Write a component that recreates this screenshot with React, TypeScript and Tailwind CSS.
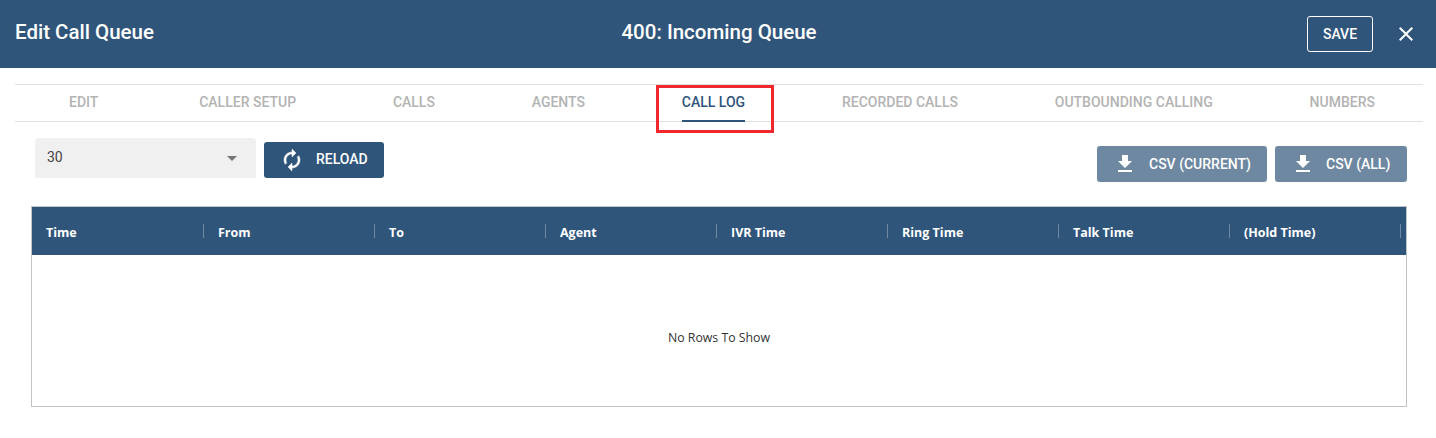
import { MdClose, MdFileDownload } from "react-icons/md";

const tabs = ["EDIT", "CALLER SETUP", "CALLS", "AGENTS", "CALL LOG", "RECORDED CALLS", "OUTBOUNDING CALLING", "NUMBERS"];
const columns = ["Time", "From", "To", "Agent", "IVR Time", "Ring Time", "Talk Time", "(Hold Time)"];

export default function App() {
  return (
    <div className="h-[438px] w-full overflow-hidden bg-white font-['Roboto',sans-serif]">
      {/* Header */}
      <div className="flex h-[68px] items-center justify-between bg-[#30557a] pl-[15px] pr-[19px] text-white">
        <h1 className="-mt-[4px] w-[300px] text-[20.5px] font-medium">Edit Call Queue</h1>
        <h2 className="-mt-[4px] text-[20.5px] font-medium">400: Incoming Queue</h2>
        <div className="flex w-[294px] items-center justify-end gap-[21px]">
          <button className="h-[36px] w-[66px] rounded-[3px] border border-white text-[14px] font-medium">SAVE</button>
          <MdClose className="h-[24px] w-[24px] -mr-[1px]" />
        </div>
      </div>

      {/* Tabs */}
      <div className="relative mx-[15px] mt-[16px] flex h-[38px] w-[1408px] justify-between border-y border-[#e0e0e0] pl-[54px] pr-[48px] text-[14px] font-medium text-[#b3b3b3]">
        {tabs.map((tab) =>
          tab === "CALL LOG" ? (
            <div key={tab} className="relative flex h-[37px] items-center border-b-2 border-[#30557a] text-[#30557a]">
              {tab}
              <div className="absolute left-[-26px] top-0 h-[48px] w-[118px] border-[3px] border-[#f0272d]" />
            </div>
          ) : (
            <div key={tab} className="flex h-[35px] items-center first:mr-[4px]">
              {tab}
            </div>
          )
        )}
      </div>

      {/* Toolbar */}
      <div className="mt-[16px] flex items-start justify-between pl-[35px] pr-[29px]">
        <div className="flex items-start gap-[8px]">
          <div className="flex h-[40px] w-[221px] items-center justify-between rounded-t-[4px] bg-[#f0f0f0] pl-[12px] pr-[19px] text-[14px] text-[#444444]">
            <span className="-mt-[2px]">30</span>
            <span className="h-0 w-0 border-x-[5px] border-t-[5px] border-x-transparent border-t-[#757575]" />
          </div>
          <button className="mt-[4px] flex h-[36px] w-[120px] items-center rounded-[3px] bg-[#30557a] pl-[16px] text-[14px] font-medium text-white">
            <svg viewBox="0 0 24 24" className="h-[24px] w-[24px] -scale-x-100 fill-current stroke-current stroke-[0.5]">
              <path d="M12 4V1L8 5l4 4V6c3.31 0 6 2.69 6 6 0 1.01-.25 1.97-.7 2.8l1.46 1.46C19.54 15.03 20 13.57 20 12c0-4.42-3.58-8-8-8zm0 14c-3.31 0-6-2.69-6-6 0-1.01.25-1.97.7-2.8L5.24 7.74C4.46 8.97 4 10.43 4 12c0 4.42 3.58 8 8 8v3l4-4-4-4v3z" />
            </svg>
            <span className="ml-[12px] -mt-[1px]">RELOAD</span>
          </button>
        </div>
        <div className="mt-[8px] flex gap-[8px]">
          <button className="flex h-[36px] w-[170px] items-center rounded-[3px] bg-[#6e88a2] pl-[16px] text-[14px] font-medium text-white">
            <MdFileDownload className="h-[24px] w-[24px]" />
            <span className="ml-[12px]">CSV (CURRENT)</span>
          </button>
          <button className="flex h-[36px] w-[132px] items-center rounded-[3px] bg-[#6e88a2] pl-[16px] text-[14px] font-medium text-white">
            <MdFileDownload className="h-[24px] w-[24px]" />
            <span className="ml-[11px]">CSV (ALL)</span>
          </button>
        </div>
      </div>

      {/* Grid */}
      <div className="ml-[31px] mt-[24px] flex h-[201px] w-[1376px] flex-col border border-[#bdc3c7] font-['Open_Sans',sans-serif]">
        <div className="flex h-[48px] shrink-0 items-center bg-[#30557a] pl-px text-[12.5px] font-bold text-white">
          {columns.map((col) => (
            <div key={col} className="relative flex h-[48px] w-[171px] items-center pl-[14px] pt-[5px] first:pl-[13px]">
              {col}
              <span className="absolute right-0 top-[17px] h-[14px] w-px bg-white/30" />
            </div>
          ))}
        </div>
        <div className="flex flex-1 items-center justify-center pt-[16px] text-[12.3px] text-[#333333]">No Rows To Show</div>
      </div>
    </div>
  );
}
